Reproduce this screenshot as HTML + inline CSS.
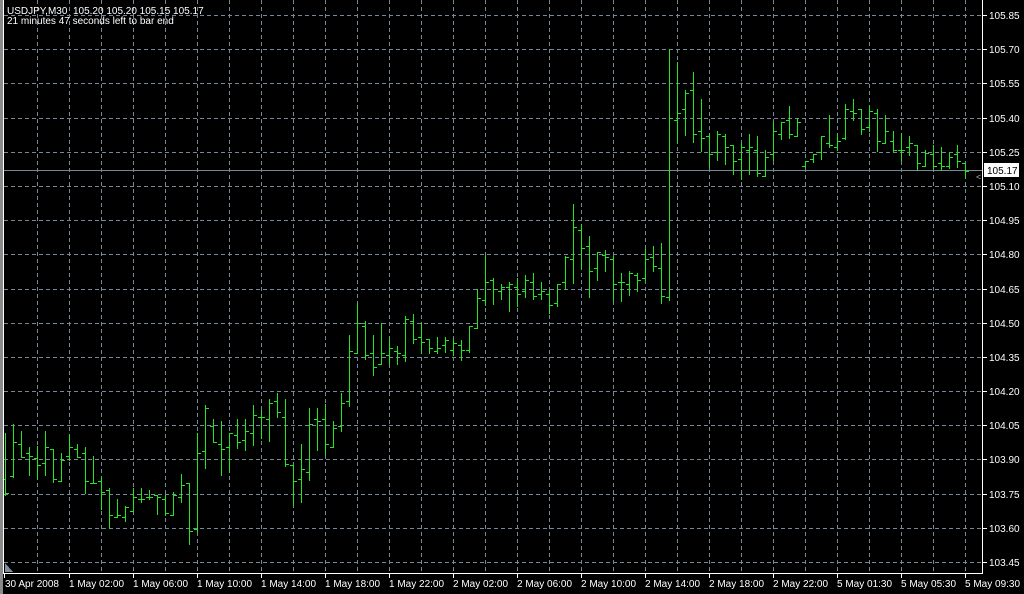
<!DOCTYPE html>
<html><head><meta charset="utf-8"><style>
html,body{margin:0;padding:0;background:#000;width:1024px;height:594px;overflow:hidden}
svg{display:block;font-family:"Liberation Sans",sans-serif;font-size:10px}
text{white-space:pre}
</style></head><body>
<svg id="s" width="1024" height="594" xmlns="http://www.w3.org/2000/svg" shape-rendering="crispEdges">
<rect width="1024" height="594" fill="#000"/>
<rect x="0" y="0" width="3" height="594" fill="#8a8a8a"/>
<g id="grid" stroke="#778899" stroke-dasharray="4 3"></g>
<line x1="4" y1="170.5" x2="982" y2="170.5" stroke="#778899"/>
<g id="bars" stroke="#22e622"></g>
<line x1="3.5" y1="0" x2="3.5" y2="574" stroke="#fff"/>
<line x1="982.5" y1="0" x2="982.5" y2="574" stroke="#fff"/>
<line x1="3" y1="573.5" x2="983" y2="573.5" stroke="#fff"/>
<g id="ax" stroke="#fff"></g>
<g id="lab" fill="#fff"></g>
<polygon points="5,563 5,572 13,572" fill="#8090a0"/>
<text x="976" y="180" fill="#aaa" font-size="9">&lt;</text>
<rect x="984" y="163" width="35" height="14" fill="#fff"/>
<text x="987" y="174" fill="#000">105.17</text>
<text x="7" y="14" fill="#fff">USDJPY,M30&#160;&#160;105.20&#160;105.20&#160;105.15&#160;105.17</text>
<text x="7" y="24" fill="#fff">21 minutes 47 seconds left to bar end</text>
</svg>
<script>
var NS="http://www.w3.org/2000/svg";
function el(p,t,a,txt){var e=document.createElementNS(NS,t);for(var k in a)e.setAttribute(k,a[k]);if(txt)e.textContent=txt;document.getElementById(p).appendChild(e);}
for(var x=37;x<=965;x+=32)el("grid","line",{x1:x+.5,y1:0,x2:x+.5,y2:573});
var prices=["105.85","105.70","105.55","105.40","105.25","105.10","104.95","104.80","104.65","104.50","104.35","104.20","104.05","103.90","103.75","103.60","103.45"];
for(var k=0;k<17;k++){var y=Math.round(15+34.19*k);el("grid","line",{x1:4,y1:y+.5,x2:982,y2:y+.5});
el("ax","line",{x1:983,y1:y+.5,x2:987,y2:y+.5});el("lab","text",{x:989,y:y+4},prices[k]);}
var tl=["1 May 02:00","1 May 06:00","1 May 10:00","1 May 14:00","1 May 18:00","1 May 22:00","2 May 02:00","2 May 06:00","2 May 10:00","2 May 14:00","2 May 18:00","2 May 22:00","5 May 01:30","5 May 05:30","5 May 09:30"];
el("ax","line",{x1:4.5,y1:574,x2:4.5,y2:578});el("lab","text",{x:5,y:587},"30 Apr 2008");
for(var k=0;k<15;k++){var x=69+64*k;el("ax","line",{x1:x+.5,y1:574,x2:x+.5,y2:578});el("lab","text",{x:x,y:587},tl[k]);}
var B=[];
function add(list,ox,oy){list.forEach(function(r){B.push([oy+r[0]/3,oy+r[1]/3,oy+r[2]/3,oy+r[3]/3]);});}
add([[100,285,238,280],[72,230,228,127],[94,170,132,170],[142,225,160,168],[138,236,175,196],[94,225,190,142],[148,245,148,238],[160,244,244,181],[103,180,168,142],[132,170,148,170],[142,278,160,243],[168,250,250,250],[232,326,244,277],[264,384,270,346],[297,352,352,346],[318,362,352,322],[264,334,334,292],[264,305,298,298],[270,298,292,292],[286,342,286,292],[284,346,298,340],[276,346,346,286],[222,305,292,256],[250,432,250,394],[100,395,388,160]],0,400);
add([[316,503,454,325],[357,427,379,427],[363,524,433,448],[400,515,442,400],[357,443,406,427],[357,449,421,394],[316,434,400,346],[330,413,352,352],[297,422,358,310],[278,352,304,337],[297,497,352,491],[494,614,496,544],[432,605,538,508],[324,539,517,373],[324,449,358,364],[313,461,358,433],[363,442,442,385],[278,394,379,310],[106,317,304,154],[8,160,160,70],[64,176,79,166],[106,224,160,202],[70,193,193,160],[112,193,166,145],[139,193,154,160],[48,182,166,58],[42,128,64,118],[69,160,112,127],[118,160,118,145],[112,160,154,145]],0,300);
B.push([337,352,345,340],[338,355,350,343],[340,360,345,350],[326,352,350,326]);
add([[297,415,415,325],[195,344,331,277],[265,341,271,298],[283,326,304,292],[277,362,292,283],[265,347,292,313],[256,320,304,271],[250,326,277,319],[277,326,313,304],[298,368,313,346],[283,347,340,283],[199,298,277,202],[42,278,208,112],[103,235,121,175],[139,320,169,244],[187,271,235,187],[181,244,196,202],[199,331,208,283],[250,332,277,277],[244,314,283,250],[250,304,256,271],[176,271,265,208],[168,244,202,229],[160,340,235,319]],0,190);
B.push([49,300,297,118],[62,142,120,113],[90,135,109,93],[72,142,90,134],[99,151,131,138]);
add([[132,230,138,192],[123,210,187,132],[132,222,139,172],[166,251,166,214],[160,266,208,172],[132,251,181,172],[139,257,181,250],[181,257,257,202],[97,210,192,124],[97,147,132,97],[48,145,91,132],[85,139,139,97],[213,230,229,213],[193,215,208,193],[139,208,187,139],[75,172,160,166],[133,181,172,154],[42,146,145,58],[28,91,64,70],[58,133,58,118],[44,124,112,64],[57,182,70,154],[75,160,160,124],[124,182,154,181],[133,214,181,181]],0,90);
add([[408,465,440,428],[435,510,435,490],[450,498,498,458],[435,505,462,498],[440,510,490,498],[456,505,498,470],[436,500,462,483],[490,532,490,512]],0,0);
B.forEach(function(b,i){var x=5+8*i+.5,h=Math.round(b[0]),l=Math.round(b[1]),o=Math.round(b[2])+.5,c=Math.round(b[3])+.5;
el("bars","line",{x1:x,y1:h,x2:x,y2:l+1});el("bars","line",{x1:x-3.5,y1:o,x2:x,y2:o});el("bars","line",{x1:x,y1:c,x2:x+3.5,y2:c});});
</script>
</body></html>
